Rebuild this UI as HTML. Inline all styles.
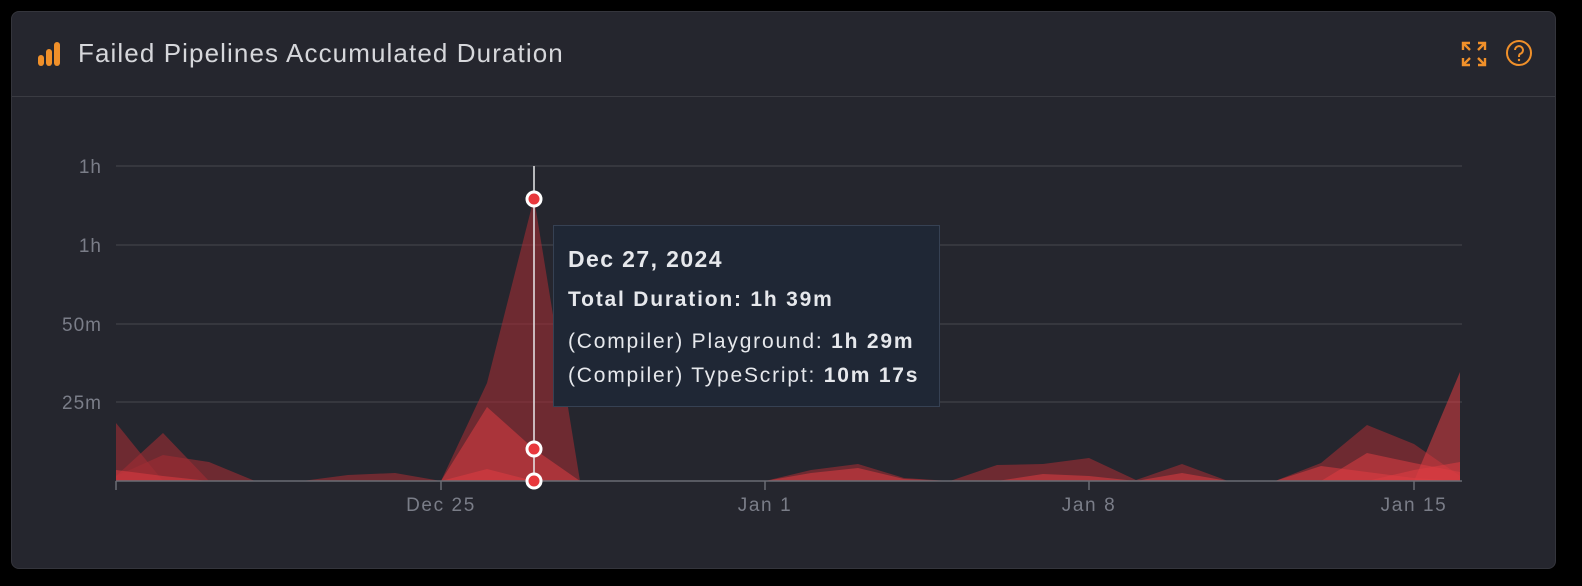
<!DOCTYPE html>
<html><head><style>
body{margin:0;width:1582px;height:586px;background:#000;overflow:hidden;font-family:"Liberation Sans",sans-serif}
.panel{position:absolute;left:11px;top:11px;width:1545px;height:558px;background:#25262e;border-radius:8px;border:1px solid #34353c;box-sizing:border-box}
.hdr{position:absolute;left:0;top:0;width:100%;height:84px;border-bottom:1px solid #3a3b42}
.title{position:absolute;left:66px;top:26px;font-size:26px;letter-spacing:1.1px;color:#d6d7db}
.tt{position:absolute;left:553px;top:225px;width:387px;height:182px;background:#1f2735;border:1px solid #364153;box-sizing:border-box;color:#e6e8ec;font-size:21px;letter-spacing:1.8px}
.tt div{position:absolute;left:14px;white-space:nowrap}
</style></head><body>
<div class="panel"><div class="hdr">
<svg style="position:absolute;left:24px;top:28px" width="28" height="28"><g fill="#f0902a"><rect x="2" y="15" width="6" height="11" rx="3"/><rect x="10" y="9" width="6" height="17" rx="3"/><rect x="18" y="2" width="6" height="24" rx="3"/></g></svg>
<div class="title">Failed Pipelines Accumulated Duration</div>
<svg style="position:absolute;left:1448px;top:28px" width="28" height="28" fill="none" stroke="#f0902a" stroke-width="2.4"><path d="M3 10V3h7M3 3l7 7M25 10V3h-7M25 3l-7 7M3 18v7h7M3 25l7-7M25 18v7h-7M25 25l-7-7"/></svg>
<svg style="position:absolute;left:1492px;top:26px" width="30" height="30" fill="none" stroke="#f0902a" stroke-width="2"><circle cx="15" cy="15" r="12"/><path d="M11 12a4 4 0 1 1 5 4c-1 .5-1 1.5-1 3"/><circle cx="15" cy="22" r="1.2" fill="#f0902a" stroke="none"/></svg>
</div></div>
<svg style="position:absolute;left:0;top:0" width="1582" height="586">
<g stroke="#3c3d44" stroke-width="1.5"><line x1="116" y1="166" x2="1462" y2="166"/><line x1="116" y1="245" x2="1462" y2="245"/><line x1="116" y1="324" x2="1462" y2="324"/><line x1="116" y1="402" x2="1462" y2="402"/></g>
<g fill="#7a7d88" font-size="19" letter-spacing="1" text-anchor="end" font-family="Liberation Sans,sans-serif"><text x="102" y="173">1h</text><text x="102" y="252">1h</text><text x="102" y="331">50m</text><text x="102" y="409">25m</text></g>
<g fill="#7a7d88" font-size="19" letter-spacing="1.6" text-anchor="middle" font-family="Liberation Sans,sans-serif"><text x="441" y="511">Dec 25</text><text x="765" y="511">Jan 1</text><text x="1089" y="511">Jan 8</text><text x="1414" y="511">Jan 15</text></g>
<g fill="rgba(160,45,52,0.6)">
<polygon points="116,481 116,423 163,481 302,481 348,475 395,473 441,481 487,383 534,198 580,481"/>
<polygon points="116,481 116,476 163,433 209,481"/>
<polygon points="116,481 116,476 163,455 209,462 255,481"/>
<polygon points="765,481 811,470 858,464 904,478 950,481 997,465 1043,464 1089,458 1136,480 1182,464 1228,481"/>
<polygon points="1275,481 1321,463 1367,425 1414,444 1460,476 1460,481"/>
</g>
<g fill="rgba(220,60,65,0.55)">
<polygon points="441,481 487,407 534,449 580,481"/>
<polygon points="441,481 487,469 534,481"/>
<polygon points="116,481 116,470 163,476 209,481"/>
<polygon points="765,481 811,473 858,468 904,479 950,481"/>
<polygon points="997,481 1043,474 1089,476 1136,481 1182,473 1228,481"/>
<polygon points="1275,481 1321,466 1367,472 1414,478 1460,481"/>
<polygon points="1321,481 1367,453 1414,463 1460,472 1460,481"/>
<polygon points="1414,481 1460,372 1460,481"/>
<polygon points="1367,481 1414,470 1460,462 1460,481"/>
</g>
<line x1="116" y1="481" x2="1462" y2="481" stroke="#6a6c74" stroke-width="1.5"/>
<g stroke="#6a6c74" stroke-width="1.5"><line x1="116" y1="481" x2="116" y2="490"/><line x1="441" y1="481" x2="441" y2="490"/><line x1="765" y1="481" x2="765" y2="490"/><line x1="1089" y1="481" x2="1089" y2="490"/><line x1="1414" y1="481" x2="1414" y2="490"/></g>
<line x1="534" y1="166" x2="534" y2="481" stroke="#e8e8ea" stroke-width="1.5"/>
<g fill="#e8383d" stroke="#fff" stroke-width="3"><circle cx="534" cy="199" r="7"/><circle cx="534" cy="449" r="7"/><circle cx="534" cy="481" r="7"/></g>
</svg>
<div class="tt">
<div style="top:20px;font-weight:bold;font-size:23px;letter-spacing:1.4px">Dec 27, 2024</div>
<div style="top:62px;font-weight:bold">Total Duration: 1h 39m</div>
<div style="top:104px">(Compiler) Playground: <b>1h 29m</b></div>
<div style="top:138px">(Compiler) TypeScript: <b>10m 17s</b></div>
</div>
</body></html>
